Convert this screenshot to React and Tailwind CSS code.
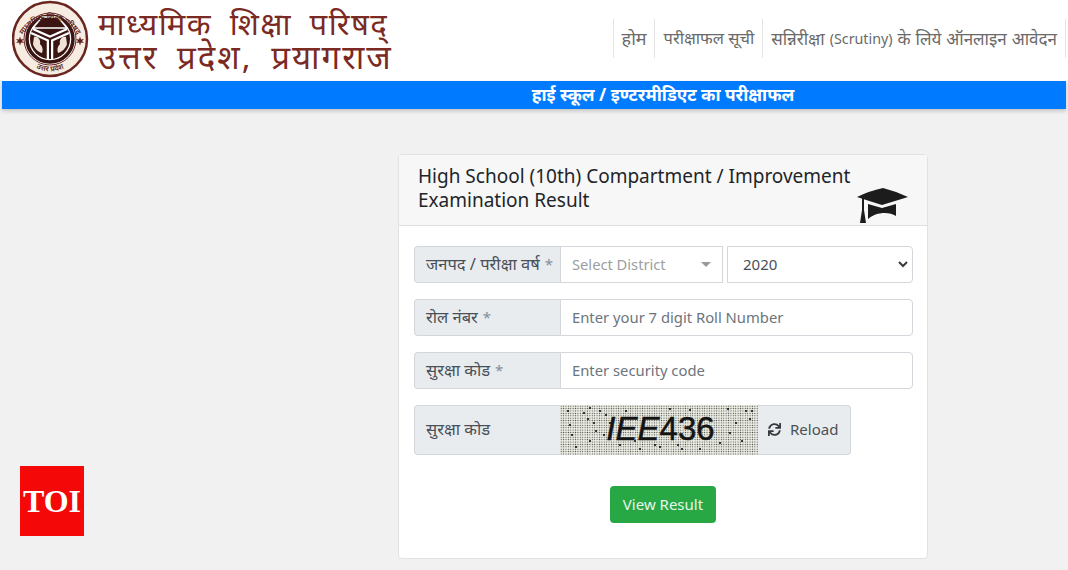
import React from "react";
import { FaSync } from "react-icons/fa";

function Logo() {
  return (
    <svg width="78" height="78" viewBox="0 0 78 78" className="shrink-0">
      <defs>
        <path id="topArc" d="M8 44 A30.5 30.5 0 0 1 68 44" />
        <path id="botArc" d="M14 60 A31 31 0 0 0 62 60" />
      </defs>
      <circle cx="38" cy="39" r="37" fill="#f6ece2" stroke="#6a2620" strokeWidth="2.5" />
      <circle cx="38" cy="39" r="26" fill="#fff" stroke="#6a2620" strokeWidth="1" />
      <circle cx="38" cy="39" r="23" fill="#fff" stroke="#3a1512" strokeWidth="3.5" />
      <circle cx="38" cy="39" r="20" fill="#3a1512" />
      <path d="M30 17 L46 17 L55 28 L21 28 Z" fill="#3a1512" stroke="#fff" strokeWidth="1.5" />
      <path d="M38 39 L20 31 M38 39 L56 31 M38 39 L38 59" stroke="#fff" strokeWidth="6.5" fill="none" />
      <path d="M38 39 L20 31 M38 39 L56 31 M38 39 L38 59" stroke="#3a1512" strokeWidth="2" fill="none" />
      <path d="M22 37 C26 36 29 40 28 44 C31 47 31 50 30 53 C26 52 22 48 21 44 Z" fill="#efe3d8" />
      <path d="M54 37 C50 36 47 40 48 44 C45 47 45 50 46 53 C50 52 54 48 55 44 Z" fill="#efe3d8" />
      <text fontSize="7.5" fill="#5b1f1a" fontFamily="'Noto Sans', sans-serif" fontWeight="600">
        <textPath href="#topArc" startOffset="50%" textAnchor="middle">माध्यमिक शिक्षा परिषद</textPath>
      </text>
      <text fontSize="7.5" fill="#5b1f1a" fontFamily="'Noto Sans', sans-serif" fontWeight="600">
        <textPath href="#botArc" startOffset="50%" textAnchor="middle">उत्तर प्रदेश</textPath>
      </text>
      <path d="M4 43 l2 -2 l-2 -2 l3 0.5 l1 -3 l1 3 l3 -0.5 l-2 2 l2 2 l-3 -0.5 l-1 3 l-1 -3 Z" fill="#5b1f1a" />
      <path d="M64 43 l2 -2 l-2 -2 l3 0.5 l1 -3 l1 3 l3 -0.5 l-2 2 l2 2 l-3 -0.5 l-1 3 l-1 -3 Z" fill="#5b1f1a" />
    </svg>
  );
}

function Cap() {
  return (
    <svg width="52" height="36" viewBox="0 0 52 36" className="absolute left-[458px] top-[33px]">
      <path d="M26 0 Q38 3 51 9 Q38 13 25 17 Q12 13 0 9 Q12 3 26 0 Z" fill="#1c1c1c" />
      <path d="M11 16 L25 20 L39 16 L39 28 C32 23 18 24 11 31 Z" fill="#1c1c1c" />
      <path d="M5 10 L7 10 L7 22 L9 35 L3 35 L5 22 Z" fill="#1c1c1c" />
    </svg>
  );
}

function Label({ children, tall }) {
  return (
    <div className={`w-[146px] shrink-0 flex items-center pl-[11px] bg-[#e9ecef] border border-[#d3d7db] border-r-0 rounded-l text-[#495057] text-[16.5px] ${tall ? "h-[50px] pb-[2px]" : "h-[37px]"}`}>
      {children}
    </div>
  );
}

function Star() {
  return <span className="ml-[5px] text-[#868e96] text-[15px]">*</span>;
}

function Chevron() {
  return (
    <svg width="10" height="7" viewBox="0 0 10 7">
      <path d="M1 1 L5 5 L9 1" fill="none" stroke="#343a40" strokeWidth="2" />
    </svg>
  );
}

function Captcha() {
  const dots = [
    [24, 8], [30, 3], [40, 6], [10, 20], [16, 42], [30, 36], [8, 6], [50, 18], [60, 40], [80, 44], [100, 42],
    [118, 40], [130, 5], [150, 14], [168, 4], [186, 6], [190, 14], [182, 36], [170, 28], [140, 44], [95, 40],
    [75, 36], [36, 26], [46, 10], [28, 14], [12, 30], [44, 30], [66, 6], [110, 4], [122, 44], [160, 38], [176, 18], [192, 6], [34, 18],
  ];
  return (
    <div className="relative w-[198px] h-[50px] shrink-0 flex items-center justify-center bg-[#eceee4] bg-[radial-gradient(#444_0.55px,transparent_0.85px)] bg-[length:2.4px_2.4px] overflow-hidden">
      <svg width="198" height="50" viewBox="0 0 198 50" className="absolute left-0 top-0">
        {dots.map(([x, y], i) => (
          <circle key={i} cx={x} cy={y} r="1.1" fill="#111" />
        ))}
      </svg>
      <span className="relative font-['Liberation_Sans',sans-serif] text-[#141414] text-[33px] leading-none pl-[3px] pb-[4px] [-webkit-text-stroke:0.5px_#141414]">
        <i>IEE</i>436
      </span>
    </div>
  );
}

export default function App() {
  const font = "font-['Noto_Sans','Open_Sans',sans-serif]";
  return (
    <div className={`w-[1068px] h-[570px] overflow-hidden bg-[#f1f1f1] ${font}`}>
      <header className="h-[81px] bg-white flex items-start pl-[12px]">
        <Logo />
        <div className="ml-[8px] pt-[7px] text-[#7a2a22] text-[31px] leading-[33px]">
          <div className="whitespace-nowrap tracking-[1.5px] [word-spacing:8px]">माध्यमिक शिक्षा परिषद्</div>
          <div className="whitespace-nowrap text-[33px] tracking-[2px] [word-spacing:8px]">उत्तर प्रदेश, प्रयागराज</div>
        </div>
        <nav className="ml-auto mr-[2px] mt-[19px] flex h-[39px] items-center text-[#6a6a6a] text-[16.5px] whitespace-nowrap">
          <span className="h-full flex items-center pl-[8px] pr-[7px] border-l border-[#e4e4e4] text-[18px]">होम</span>
          <span className="h-full flex items-center pl-[9px] pr-[8px] border-l border-[#e4e4e4]">परीक्षाफल सूची</span>
          <span className="h-full flex items-center pl-[8px] pr-[8px] border-x border-[#e4e4e4] text-[17px] [word-spacing:0.5px]">
            सन्निरीक्षा&nbsp;<span className="text-[14.3px]">(Scrutiny)</span>&nbsp;के लिये ऑनलाइन आवेदन
          </span>
        </nav>
      </header>
      <div className="h-[28px] mx-[2px] bg-[#007bff] shadow-[0_2px_4px_rgba(0,0,0,0.2)] flex items-center justify-center pl-[258px] text-white font-bold text-[17.3px]">
        हाई स्कूल / इण्टरमीडिएट का परीक्षाफल
      </div>
      <main className="pt-[45px] pl-[398px]">
        <section className="w-[530px] h-[405px] bg-white border border-[#e2e2e2] rounded">
          <div className="relative h-[71px] bg-[#f7f7f7] border-b border-[#dfdfdf] pl-[19px] pt-[9px] text-[#212529] text-[19px] leading-[24px]">
            <div className="whitespace-nowrap">High School (10th) Compartment / Improvement</div>
            <div>Examination Result</div>
            <Cap />
          </div>
          <div className="pl-[15px] pt-[20px] flex flex-col gap-[16px]">
            <div className="flex">
              <Label>जनपद / परीक्षा वर्ष<Star /></Label>
              <div className="w-[163px] h-[37px] flex items-center justify-between bg-white border border-[#d3d7db] pl-[11px] pr-[11px] text-[#9a9fa4] text-[14.7px]">
                <span>Select District</span>
                <span className="w-0 h-0 border-x-[5px] border-x-transparent border-t-[5px] border-t-[#999]" />
              </div>
              <div className="ml-[4px] w-[186px] h-[37px] flex items-center justify-between bg-white border border-[#d3d7db] rounded-r pl-[15px] pr-[4px] text-[#495057] text-[15px]">
                <span>2020</span>
                <Chevron />
              </div>
            </div>
            <div className="flex">
              <Label>रोल नंबर<Star /></Label>
              <input readOnly placeholder="Enter your 7 digit Roll Number" className="w-[353px] h-[37px] bg-white border border-[#d3d7db] rounded-r px-[11px] pb-[2px] text-[14.8px] placeholder:text-[#6c757d]" />
            </div>
            <div className="flex">
              <Label>सुरक्षा कोड<Star /></Label>
              <input readOnly placeholder="Enter security code" className="w-[353px] h-[37px] bg-white border border-[#d3d7db] rounded-r px-[11px] pb-[2px] text-[14.8px] placeholder:text-[#6c757d]" />
            </div>
            <div className="flex">
              <Label tall>सुरक्षा कोड</Label>
              <Captcha />
              <div className="w-[93px] h-[50px] flex items-center gap-[9px] bg-[#e9ecef] border border-[#d3d7db] border-l-0 rounded-r pl-[10px] pb-[1px] text-[#495057] text-[15px]">
                <FaSync size={13} color="#343a40" />
                <span>Reload</span>
              </div>
            </div>
          </div>
          <div className="pl-[211px] pt-[31px]">
            <button className="w-[106px] h-[37px] bg-[#28a745] rounded text-[#e6f7ea] text-[15px]">View Result</button>
          </div>
        </section>
      </main>
      <div className="absolute left-[20px] top-[466px] w-[64px] h-[70px] bg-[#f50808] flex items-center justify-center text-white font-['Liberation_Serif',serif] font-bold text-[32px] leading-none">
        TOI
      </div>
    </div>
  );
}
